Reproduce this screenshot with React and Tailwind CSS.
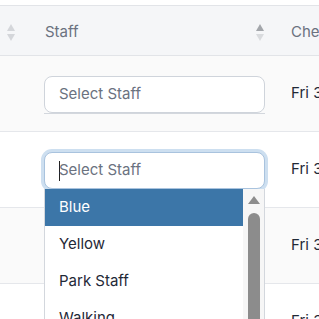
import React from 'react'

const font = { fontFamily: 'Inter, "Noto Sans", sans-serif' }

function SortIcon({ up = '#d4d6da', down = '#d4d6da' }) {
  return (
    <svg width="8" height="17" viewBox="0 0 8 17">
      <path d="M4 0 L8 7 L0 7 Z" fill={up} />
      <path d="M0 10 L8 10 L4 17 Z" fill={down} />
    </svg>
  )
}

function ClosedSelect() {
  return (
    <div className="border-b border-[#d3d7dd]">
      <div className="h-[37px] rounded-[8px] border border-[#cfd4db] bg-white flex items-center px-[14px] text-[15px] text-[#6b7280]">
        Select Staff
      </div>
    </div>
  )
}

function OpenSelect() {
  const options = ['Blue', 'Yellow', 'Park Staff', 'Walking', 'Green', 'Red']
  return (
    <div className="relative">
      <div className="h-[37px] rounded-[8px] border border-[#a9c3de] ring-[3px] ring-[#cddff0] bg-white flex items-center px-[14px] text-[15px] text-[#6b7280]">
        <span className="w-px h-[20px] bg-[#222] mr-[-1px]" />
        Select Staff
      </div>
      <div className="absolute left-0 right-0 top-[37px] z-10 bg-white border-x border-[#d3d7dd] flex">
        <div className="flex-1">
          {options.map((o, i) => (
            <div
              key={o}
              className={
                'h-[37px] flex items-center px-[14px] text-[15px] ' +
                (i === 0 ? 'bg-[#3c76a8] text-white' : 'text-[#1f2937]')
              }
            >
              {o}
            </div>
          ))}
        </div>
        <div className="w-[21px] bg-[#f6f6f6] flex flex-col items-center pt-[7px]">
          <svg width="12" height="8" viewBox="0 0 12 8">
            <path d="M6 0 L12 8 L0 8 Z" fill="#8c8c8c" />
          </svg>
          <div className="mt-[9px] w-[12px] h-[200px] rounded-t-full bg-[#8c8c8c]" />
        </div>
      </div>
    </div>
  )
}

function Row({ shade, children }) {
  return (
    <div className={'flex h-[76px] border-b border-[#e5e7eb] ' + (shade ? 'bg-[#fafafa]' : 'bg-white')}>
      <div className="w-[30px] shrink-0" />
      <div className="w-[249px] shrink-0 pl-[14px] pr-[14px] pt-[20px]">{children}</div>
      <div className="pl-[12px] flex items-center text-[15px] text-[#1f2937] whitespace-nowrap">
        Fri 30 Aug 2024
      </div>
    </div>
  )
}

export default function App() {
  return (
    <div className="w-[319px] h-[319px] overflow-hidden bg-white pt-[5px]" style={font}>
      <div className="border-y border-[#e2e4e8] bg-[#f5f6f8] h-[51px] flex items-center pt-[3px]">
        <div className="w-[30px] shrink-0 flex justify-end pr-[15px]">
          <SortIcon />
        </div>
        <div className="w-[249px] shrink-0 pl-[15px] pr-[15px] flex items-center justify-between text-[15px] text-[#6b7280]">
          <span>Staff</span>
          <SortIcon up="#a3a6ab" down="#d9dbde" />
        </div>
        <div className="pl-[12px] text-[15px] text-[#6b7280] whitespace-nowrap">Check In</div>
      </div>
      <Row shade>
        <ClosedSelect />
      </Row>
      <Row>
        <OpenSelect />
      </Row>
      <Row shade>
        <ClosedSelect />
      </Row>
      <Row>
        <ClosedSelect />
      </Row>
    </div>
  )
}
